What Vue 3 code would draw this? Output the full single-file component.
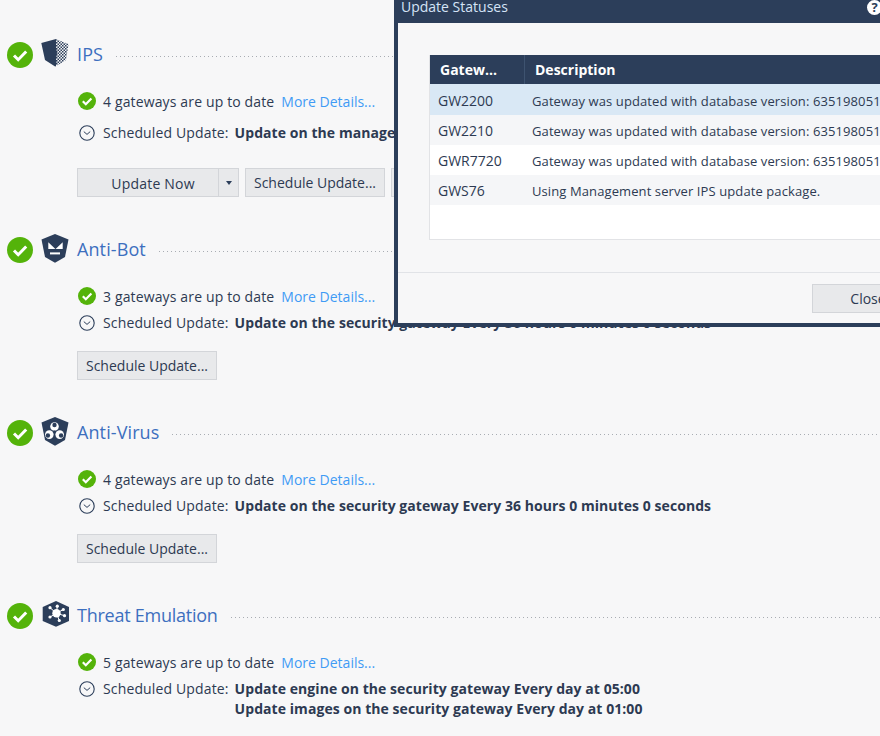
<script setup>
const sections = [
  { id: 'ips', title: 'IPS', status: '4 gateways are up to date', lines: ['Update on the management server Every 36 hours 0 minutes 0 seconds'], wide: true },
  { id: 'bot', title: 'Anti-Bot', status: '3 gateways are up to date', lines: ['Update on the security gateway Every 36 hours 0 minutes 0 seconds'] },
  { id: 'virus', title: 'Anti-Virus', status: '4 gateways are up to date', lines: ['Update on the security gateway Every 36 hours 0 minutes 0 seconds'] },
  { id: 'te', title: 'Threat Emulation', status: '5 gateways are up to date', lines: ['Update engine on the security gateway Every day at 05:00', 'Update images on the security gateway Every day at 01:00'], noButton: true },
]
const rows = [
  ['GW2200', 'Gateway was updated with database version: 635198051234567'],
  ['GW2210', 'Gateway was updated with database version: 635198051234567'],
  ['GWR7720', 'Gateway was updated with database version: 635198051234567'],
  ['GWS76', 'Using Management server IPS update package.'],
]
const spokes = [[9, 7.7], [16.3, 6.2], [22.3, 9.5], [23.5, 15.7], [18.3, 20.5], [9, 17]]
</script>

<template>
  <div class="page">
    <section v-for="s in sections" :key="s.id" class="section" :class="{ wide: s.wide }">
      <header class="head">
        <svg class="check big" viewBox="0 0 26 26">
          <circle cx="13" cy="13" r="13" fill="#54b30a" />
          <path d="M7 13.5l4.2 4.2L19.2 9.5" fill="none" stroke="#fff" stroke-width="3" />
        </svg>
        <svg class="shield" viewBox="0 0 28 30">
          <template v-if="s.id === 'ips'">
            <defs>
              <pattern id="chk" width="3" height="3" patternUnits="userSpaceOnUse">
                <rect width="1.5" height="1.5" fill="#2c3e5a" />
                <rect x="1.5" y="1.5" width="1.5" height="1.5" fill="#2c3e5a" />
              </pattern>
            </defs>
            <path d="M15 .3L27.5 5 25 21 14 27.7z" fill="url(#chk)" />
            <path d="M15 0L.3 4 4 21 14.5 27.7 15.5 24 15 20 16 14 15 8z" fill="#2c3e5a" />
          </template>
          <template v-else-if="s.id === 'bot'">
            <path d="M14 0L27.5 5.5 24 23 14 28.7 4 23 .5 5.5z" fill="#2c3e5a" />
            <path d="M7.3 8.3L14.4 15H7.3zM21.7 8.3V15H14.6z" fill="#fff" />
            <rect x="9" y="18.4" width="10" height="2" fill="#fff" />
          </template>
          <template v-else-if="s.id === 'virus'">
            <path d="M14 0L27.5 5.5 24 23 14 28.7 4 23 .5 5.5z" fill="#2c3e5a" />
            <g fill="#fff">
              <circle cx="13.5" cy="9.5" r="4.3" />
              <circle cx="8.3" cy="17.6" r="4.3" />
              <circle cx="18.7" cy="17.6" r="4.3" />
            </g>
            <g fill="#2c3e5a">
              <circle cx="13.5" cy="8" r="2.2" />
              <circle cx="6.9" cy="18.5" r="2.2" />
              <circle cx="20.1" cy="18.5" r="2.2" />
            </g>
            <circle cx="13.5" cy="14.6" r="1.1" fill="#2c3e5a" />
          </template>
          <template v-else>
            <path d="M15 1L28 7V21L15 26.7 1.7 21V7z" fill="#2c3e5a" />
            <g stroke="#fff" stroke-width="1">
              <line v-for="(p, i) in spokes" :key="i" x1="15.5" y1="13.3" :x2="p[0]" :y2="p[1]" />
            </g>
            <circle cx="15.5" cy="13.3" r="4.2" fill="#fff" />
            <circle v-for="(p, i) in spokes" :key="'c' + i" :cx="p[0]" :cy="p[1]" r="1.6" fill="#fff" />
          </template>
        </svg>
        <h2 class="title" :class="'title-' + s.id">{{ s.title }}</h2>
        <span class="dots"></span>
      </header>

      <div class="body">
        <div class="row status">
          <svg class="check small" viewBox="0 0 18 18">
            <circle cx="9" cy="9" r="9" fill="#54b30a" />
            <path d="M4.8 9.3l3 3L13.4 6.6" fill="none" stroke="#fff" stroke-width="2.2" />
          </svg>
          <span class="text">{{ s.status }}</span>
          <a class="link">More Details...</a>
        </div>
        <div class="row sched">
          <svg class="clock" viewBox="0 0 16 16">
            <circle cx="8" cy="8" r="7.2" fill="none" stroke="#2c3e5a" stroke-width="1.1" />
            <path d="M4.8 6.6L8 9.4l3.2-2.8" fill="none" stroke="#2c3e5a" stroke-width="1" />
          </svg>
          <span class="text label">Scheduled Update:</span>
          <div class="lines">
            <strong v-for="l in s.lines" :key="l">{{ l }}</strong>
          </div>
        </div>
        <div v-if="s.id === 'ips'" class="actions">
          <div class="btn split">
            <span class="main">Update Now</span>
            <span class="caret"><i></i></span>
          </div>
          <button class="btn sch">Schedule Update...</button>
          <button class="btn sch">Update from File...</button>
        </div>
        <div v-else-if="!s.noButton" class="actions">
          <button class="btn sch">Schedule Update...</button>
        </div>
      </div>
    </section>

    <div class="modal">
      <div class="modal-head">
        <span>Update Statuses</span>
        <span class="help">?</span>
      </div>
      <div class="modal-body">
        <div class="table">
          <div class="thead">
            <div class="c1">Gatew...</div>
            <div class="c2">Description</div>
          </div>
          <div v-for="(r, i) in rows" :key="r[0]" class="tr" :class="'r' + i">
            <div class="d1">{{ r[0] }}</div>
            <div class="d2">{{ r[1] }}</div>
          </div>
        </div>
      </div>
      <div class="modal-foot">
        <button class="btn close">Close</button>
      </div>
    </div>
  </div>
</template>

<style>
html, body { margin: 0; background: #f7f7f8; }
</style>

<style scoped>
.page {
  position: relative;
  width: 880px;
  height: 736px;
  overflow: hidden;
  box-sizing: border-box;
  padding-top: 39px;
  background: #f7f7f8;
  font-family: "Open Sans", "Noto Sans", sans-serif;
  font-size: 14px;
  color: #2d3a52;
}
.section { margin-bottom: 37px; }
.head { display: flex; align-items: center; height: 30px; padding-left: 7px; }
.check { display: block; flex: none; }
.big { width: 26px; height: 26px; margin-top: 2px; }
.shield { width: 28px; height: 30px; margin-left: 8px; flex: none; }
.title { margin: 0 0 0 8px; font-size: 18px; font-weight: 400; color: #3d6fbf; line-height: 30px; white-space: nowrap; letter-spacing: .1px; }
.title-te { letter-spacing: -.25px; }
.dots {
  flex: 1;
  height: 1px;
  margin: 5px 0 0 13px;
  background-image: linear-gradient(to right, #a9adb3 1px, transparent 1px);
  background-size: 4px 1px;
}
.body { padding: 20px 0 0 77px; }
.row { display: flex; align-items: center; height: 26px; white-space: nowrap; }
.status { box-sizing: border-box; padding-bottom: 2px; }
.text { letter-spacing: .14px; }
.small { width: 18px; height: 18px; margin: 0 7px 0 1px; }
.link { margin-left: 7px; color: #3f9bf5; }
.sched { align-items: flex-start; padding-top: 3px; height: auto; min-height: 23px; }
.wide .sched { margin-top: 5px; }
.clock { width: 16px; height: 16px; margin: 2px 8px 0 2px; flex: none; }
.label { line-height: 20px; margin-right: 6px; }
.lines { display: flex; flex-direction: column; line-height: 20px; }
.lines strong { font-weight: 700; letter-spacing: .06px; }
.actions { display: flex; gap: 6px; margin-top: 15px; }
.wide .actions { margin-top: 22px; }
.btn {
  box-sizing: border-box;
  height: 29px;
  background: #e8e9eb;
  border: 1px solid #d3d5d9;
  font: inherit;
  color: #2d3a52;
  padding: 0;
  white-space: nowrap;
}
.sch { width: 140px; flex: none; }
.split { width: 162px; display: flex; align-items: center; flex: none; }
.main { width: 140px; box-sizing: border-box; padding: 2px 0 0 10px; text-align: center; letter-spacing: .2px; }
.caret { flex: 1; height: 27px; border-left: 1px solid #d3d5d9; display: flex; align-items: center; justify-content: center; }
.caret i { width: 0; height: 0; border: 3.5px solid transparent; border-top: 4px solid #2c3e5a; border-bottom: 0; }
.modal {
  position: absolute;
  left: 394px;
  top: -8px;
  width: 600px;
  height: 335px;
  box-sizing: border-box;
  border: 4px solid #2c3e5a;
  border-top: 0;
  background: #f7f7f8;
  display: flex;
  flex-direction: column;
}
.modal-head {
  height: 31px;
  flex: none;
  background: #2c3e5a;
  color: #d5e4f7;
  padding: 0 0 5px 3px;
  box-sizing: border-box;
  display: flex;
  align-items: flex-end;
  position: relative;
  line-height: 22px;
}
.help {
  position: absolute;
  left: 469px;
  top: 8px;
  width: 15px;
  height: 15px;
  border-radius: 50%;
  background: #fff;
  color: #2c3e5a;
  font-weight: 700;
  font-size: 13px;
  line-height: 15px;
  text-align: center;
}
.modal-body { flex: 1; padding: 32px 0 0 31px; border-bottom: 1px solid #e1e3e7; }
.table {
  box-sizing: border-box;
  width: 540px;
  height: 185px;
  border: 1px solid #e2e3e6;
  border-top: 0;
  background: #fff;
}
.thead { display: flex; height: 29px; background: #2c3e5a; color: #fff; font-weight: 700; line-height: 29px; }
.c1 { width: 95px; box-sizing: border-box; padding-left: 10px; border-right: 1px solid #3e5370; }
.c2 { padding-left: 10px; }
.tr { display: flex; height: 30px; line-height: 32px; white-space: nowrap; }
.r0 { height: 31px; line-height: 34px; background: #d9e8f5; }
.r1, .r3 { background: #f5f6f8; }
.d1 { width: 102px; flex: none; padding-left: 8px; box-sizing: border-box; }
.d2 { font-size: 13px; letter-spacing: .1px; }
.modal-foot { flex: none; height: 50px; padding: 11px 0 0 414px; box-sizing: border-box; }
.close { width: 112px; }
</style>
